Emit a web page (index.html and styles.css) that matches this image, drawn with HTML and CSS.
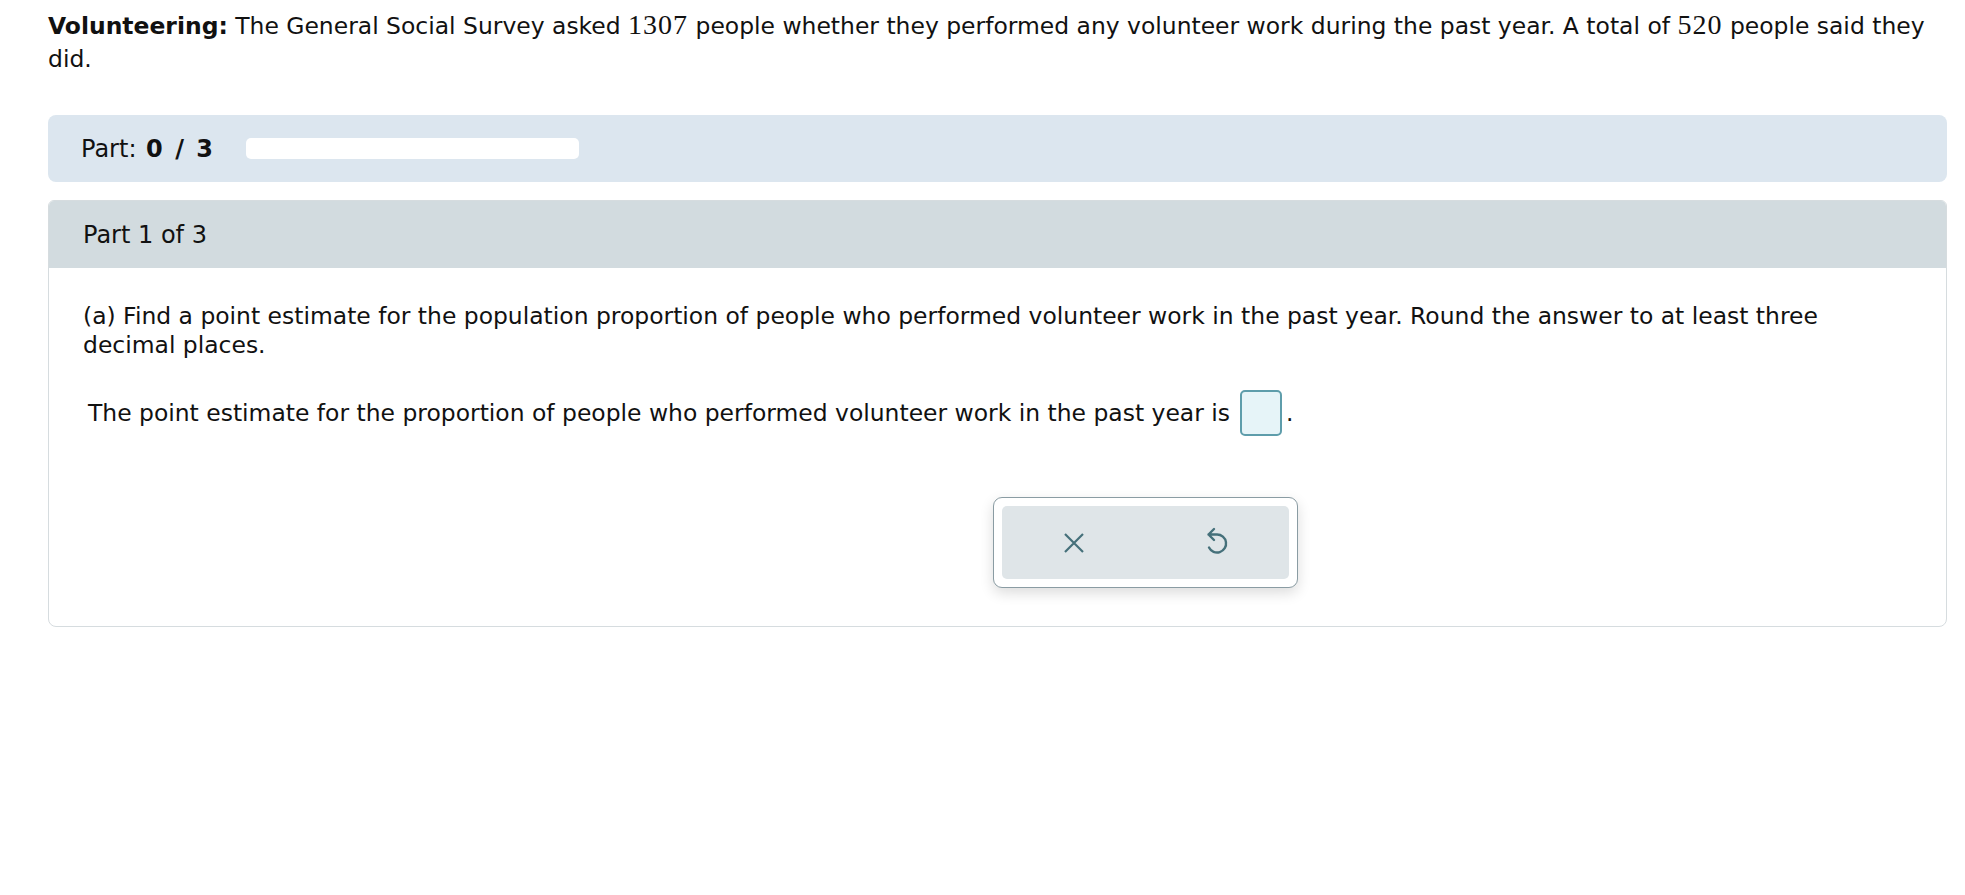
FILE: index.html
```html
<!DOCTYPE html>
<html lang="en">
<head>
    <meta charset="UTF-8">
    <title>Volunteering</title>
    <link rel="stylesheet" href="styles.css">
</head>
<body>
    <div class="page">
        <p class="intro">
            <b>Volunteering:</b> The General Social Survey asked <span class="num">1307</span> people whether they performed any volunteer work during the past year. A total of <span class="num">520</span> people said they did.
        </p>

        <div class="progress-bar">
            <span>Part: <b class="score">0 / 3</b></span>
            <div class="track"></div>
        </div>

        <div class="part-card">
            <div class="part-header">Part 1 of 3</div>
            <div class="part-body">
                <p class="question">(a) Find a point estimate for the population proportion of people who performed volunteer work in the past year. Round the answer to at least three decimal places.</p>

                <div class="answer">
                    The point estimate for the proportion of people who performed volunteer work in the past year is
                    <span class="answer-box"></span>.
                </div>

                <div class="toolbar">
                    <div class="toolbar-inner">
                        <button class="tool" title="Clear">
                            <svg width="20" height="20" viewBox="0 0 20 20">
                                <path d="M1 1 L19 19 M19 1 L1 19" stroke="#45707a" stroke-width="2.2" fill="none"/>
                            </svg>
                        </button>
                        <button class="tool" title="Undo">
                            <svg width="30" height="32" viewBox="1 2 30 32">
                                <path d="M13 4 L7.5 9.5 L13 15 M7.5 9.5 H16 A9 9 0 1 1 8 22.5" stroke="#45707a" stroke-width="2.4" fill="none" stroke-linecap="round" stroke-linejoin="round"/>
                            </svg>
                        </button>
                    </div>
                </div>
            </div>
        </div>
    </div>
</body>
</html>
```

FILE: styles.css
```css
* {
    margin: 0;
    padding: 0;
    box-sizing: border-box;
}

body {
    font-family: 'DejaVu Sans', Verdana, sans-serif;
    font-size: 23.45px;
    color: #111;
    background: #fff;
}

.page {
    padding: 10px 18px 0 48px;
}

.intro {
    line-height: 33px;
}

.num {
    font-family: 'Liberation Serif', serif;
    font-size: 28px;
    letter-spacing: 1px;
    line-height: 1;
}

.progress-bar {
    margin-top: 39px;
    height: 67px;
    background: #dce6ef;
    border-radius: 8px;
    padding-left: 33px;
    display: flex;
    align-items: center;
    gap: 33px;
    font-size: 24px;
}

.score {
    word-spacing: 4px;
    margin-left: 2px;
}

.track {
    width: 333px;
    height: 21px;
    background: #fff;
    border-radius: 5px;
}

.part-card {
    margin-top: 18px;
    border: 1px solid #d6dcdf;
    border-radius: 6px 6px 8px 8px;
}

.part-header {
    height: 67px;
    background: #d2dbdf;
    padding-left: 34px;
    display: flex;
    align-items: center;
    border-radius: 5px 5px 0 0;
    font-size: 24px;
}

.part-body {
    padding: 34px 34px 38px;
}

.question {
    line-height: 29px;
}

.answer {
    margin-top: 30px;
    padding-left: 5px;
    display: flex;
    align-items: center;
    white-space: nowrap;
}

.answer-box {
    display: inline-block;
    width: 42px;
    height: 46px;
    margin: 0 4px 0 10px;
    background: #e6f4f8;
    border: 2px solid #5e9dab;
    border-radius: 5px;
}

.toolbar {
    margin-top: 61px;
    margin-left: 910px;
    width: 305px;
    padding: 8px;
    background: #fff;
    border: 1px solid #8a9ca3;
    border-radius: 9px;
    box-shadow: 0 5px 14px rgba(0, 0, 0, 0.14);
}

.toolbar-inner {
    height: 73px;
    background: #dfe5e8;
    border-radius: 5px;
    display: flex;
}

.tool {
    flex: 1;
    border: none;
    background: none;
    display: flex;
    align-items: center;
    justify-content: center;
    cursor: pointer;
}
```
